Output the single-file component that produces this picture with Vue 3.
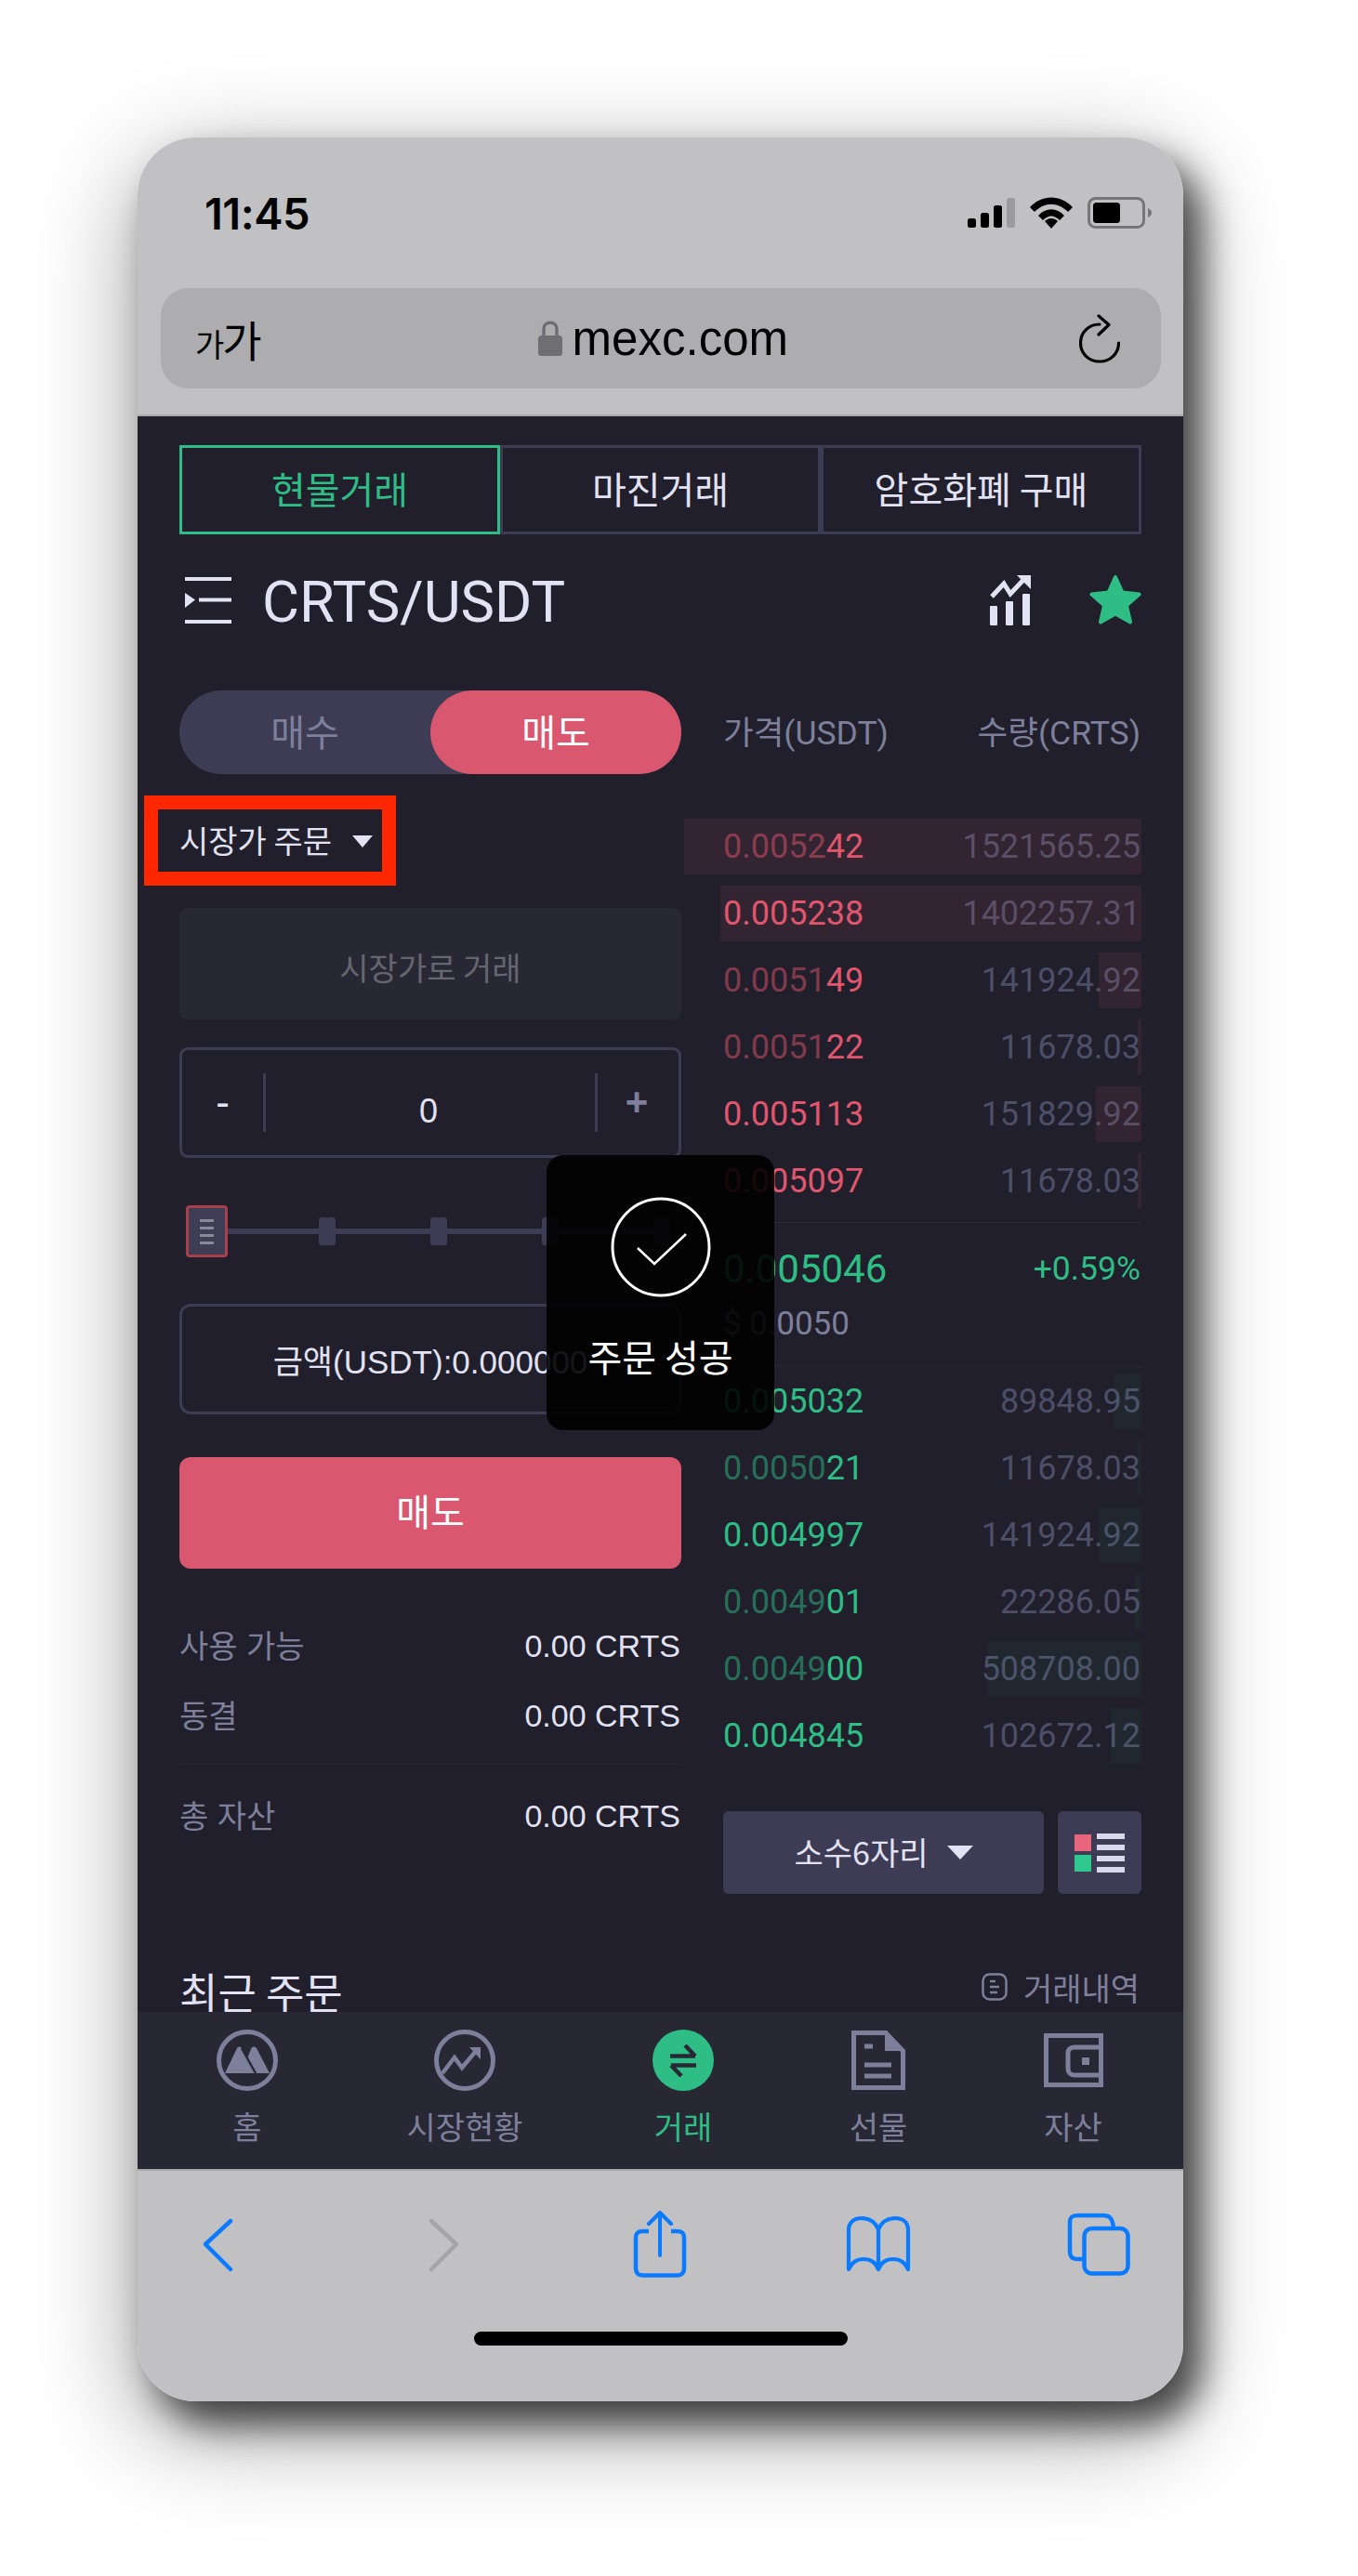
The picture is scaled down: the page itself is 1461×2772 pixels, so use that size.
<template>
  <div class="phone">
    <header class="chrome-top">
      <div class="status">
        <span class="clock">11:45</span>
        <div class="status-icons">
          <svg width="51" height="32" viewBox="0 0 51 32">
            <rect x="0" y="22" width="9" height="10" rx="2.5" fill="#000" />
            <rect x="14" y="16" width="9" height="16" rx="2.5" fill="#000" />
            <rect x="28" y="8" width="9" height="24" rx="2.5" fill="#000" />
            <rect x="42" y="0" width="9" height="32" rx="2.5" fill="#9b9b9d" />
          </svg>
          <svg width="46" height="34" viewBox="0 0 46 34">
            <path d="M0 11 C13 -3 33 -3 46 11 L41 16 C30 5 16 5 5 16 Z" fill="#000" />
            <path d="M9 20 C17 11 29 11 37 20 L32 25 C26 19 20 19 14 25 Z" fill="#000" />
            <path d="M16 26 C20 22 26 22 30 26 L23 34 Z" fill="#000" />
          </svg>
          <svg width="69" height="34" viewBox="0 0 69 34">
            <rect x="1.5" y="1.5" width="59" height="31" rx="7" fill="none" stroke="#767678" stroke-width="3" />
            <rect x="6" y="6" width="29" height="22" rx="3.5" fill="#000" />
            <path d="M65 12 C68 13 69 15 69 17 C69 19 68 21 65 22 Z" fill="#767678" />
          </svg>
        </div>
      </div>
      <div class="address">
        <span class="font-size-btn"><small>가</small>가</span>
        <div class="domain">
          <svg width="26" height="38" viewBox="0 0 26 38">
            <path d="M6 17 V9 C6 0 20 0 20 9 V17" fill="none" stroke="#6f6f73" stroke-width="3.5" />
            <rect x="0" y="16" width="26" height="22" rx="3.5" fill="#6f6f73" />
          </svg>
          <span>mexc.com</span>
        </div>
        <svg class="reload" width="44" height="53" viewBox="0 0 44 53">
          <path d="M22 11 C10 11 1.5 20 1.5 31 C1.5 42.5 10.500 51 22 51 C33.500 51 42.500 42.500 42.500 31" fill="none" stroke="#000" stroke-width="3.200" stroke-linecap="round" />
          <path d="M21 2 L32 11.500 L21 22" fill="none" stroke="#000" stroke-width="3.200" stroke-linecap="round" stroke-linejoin="round" />
        </svg>
      </div>
    </header>

    <main class="content">
      <div class="tabs">
        <button v-for="(tab, i) in tabs" :key="tab" class="tab" :class="{ active: i === 0 }">{{ tab }}</button>
      </div>

      <div class="title-row">
        <svg class="menu-icon" width="50" height="50" viewBox="0 0 50 50">
          <rect x="0" y="0" width="50" height="4" fill="#e2e2f4" />
          <rect x="15" y="22.500" width="35" height="4" fill="#e2e2f4" />
          <rect x="0" y="46" width="50" height="4" fill="#e2e2f4" />
          <path d="M0 17 L11 24.500 L0 33 Z" fill="#e2e2f4" />
        </svg>
        <h1>CRTS/USDT</h1>
        <svg class="chart-icon" width="45" height="54" viewBox="0 0 45 54">
          <path d="M2 23 L15 9 L22 20 L38 3" fill="none" stroke="#e2e2f4" stroke-width="5" />
          <path d="M29 0 H44 V15 Z" fill="#e2e2f4" />
          <rect x="0" y="33" width="8" height="21" rx="1" fill="#e2e2f4" />
          <rect x="17" y="28" width="8" height="26" rx="1" fill="#e2e2f4" />
          <rect x="35" y="20" width="8" height="34" rx="1" fill="#e2e2f4" />
        </svg>
        <svg width="56" height="54" viewBox="0 0 56 54">
          <path d="M28 2 L35.500 18.500 L53.500 20.500 L40 32.500 L44 50.500 L28 41.500 L12 50.500 L16 32.500 L2.500 20.500 L20.500 18.500 Z" fill="#2ebd85" stroke="#2ebd85" stroke-width="4" stroke-linejoin="round" />
        </svg>
      </div>

      <div class="trade">
        <section class="form">
          <div class="side-toggle">
            <span class="side">매수</span>
            <span class="side selected">매도</span>
          </div>

          <div class="order-type">
            <span>시장가 주문</span>
            <i class="caret small"></i>
          </div>

          <div class="market-field">시장가로 거래</div>

          <div class="stepper">
            <span class="step minus">-</span>
            <span class="step-value">0</span>
            <span class="step plus">+</span>
          </div>

          <div class="slider">
            <span class="handle"><b></b><b></b><b></b><b></b></span>
            <span v-for="n in 4" :key="n" class="tick"></span>
          </div>

          <div class="amount">금액(USDT):0.000000</div>
          <button class="sell-btn">매도</button>

          <div class="balance first"><span>사용 가능</span><strong>0.00 CRTS</strong></div>
          <div class="balance second"><span>동결</span><strong>0.00 CRTS</strong></div>
          <div class="balance total"><span>총 자산</span><strong>0.00 CRTS</strong></div>
        </section>

        <section class="book">
          <div class="book-head"><span>가격(USDT)</span><span>수량(CRTS)</span></div>

          <div class="rows">
            <div v-for="row in asks" :key="row.qty + row.bright" class="row ask">
              <span class="price"><em>{{ row.dim }}</em>{{ row.bright }}</span>
              <span class="qty">{{ row.qty }}</span>
              <i class="depth" :style="{ width: row.depth + 'px' }"></i>
            </div>
          </div>

          <div class="mid">
            <div class="mid-line">
              <span class="last">0.005046</span>
              <span class="change">+0.59%</span>
            </div>
            <div class="fiat">$ 0.0050</div>
          </div>

          <div class="rows">
            <div v-for="row in bids" :key="row.qty + row.bright" class="row bid">
              <span class="price"><em>{{ row.dim }}</em>{{ row.bright }}</span>
              <span class="qty">{{ row.qty }}</span>
              <i class="depth" :style="{ width: row.depth + 'px' }"></i>
            </div>
          </div>

          <div class="book-tools">
            <button class="precision"><span>소수6자리</span> <i class="caret"></i></button>
            <button class="layout-btn">
              <span class="swatches"><i></i><i></i></span>
              <span class="lines"><i></i><i></i><i></i><i></i></span>
            </button>
          </div>
        </section>
      </div>

      <div class="recent">
        <h2>최근 주문</h2>
        <span class="history">
          <svg width="28" height="30" viewBox="0 0 28 30">
            <rect x="1.500" y="1.500" width="25" height="27" rx="7" fill="none" stroke="#7d7f9b" stroke-width="2.500" />
            <path d="M9 9 H15 M9 15 H19 M9 21 H17" stroke="#7d7f9b" stroke-width="2.500" />
          </svg>
          거래내역
        </span>
      </div>

      <div class="toast">
        <svg width="108" height="108" viewBox="0 0 108 108">
          <circle cx="54" cy="54" r="52" fill="none" stroke="#fff" stroke-width="3" />
          <path d="M29 55 L47 72 L81 40" fill="none" stroke="#fff" stroke-width="2.500" />
        </svg>
        <span>주문 성공</span>
      </div>
    </main>

    <nav class="app-nav">
      <a class="nav-item">
        <svg width="66" height="66" viewBox="0 0 66 66">
          <circle cx="33" cy="33" r="30.500" fill="none" stroke="#7d7f9b" stroke-width="5" />
          <path d="M9 47 L22 20 C23 18 26 18 27 20 L33 31 L37 21 C38 18 41 18 43 20 L57 47 Z" fill="#7d7f9b" />
          <path d="M27 20 L42 47" stroke="#282835" stroke-width="2.500" />
        </svg>
        <span>홈</span>
      </a>
      <a class="nav-item">
        <svg width="66" height="66" viewBox="0 0 66 66">
          <circle cx="33" cy="33" r="30.500" fill="none" stroke="#7d7f9b" stroke-width="5" />
          <path d="M9 47 L22 30 L30 41 L45 23" fill="none" stroke="#7d7f9b" stroke-width="4.500" />
          <path d="M38 19 H50 V32 Z" fill="#7d7f9b" />
        </svg>
        <span>시장현황</span>
      </a>
      <a class="nav-item active">
        <svg width="66" height="66" viewBox="0 0 66 66">
          <circle cx="33" cy="33" r="33" fill="#2ebd85" />
          <path d="M19 28.500 H46 M35 17 L46 28.500" fill="none" stroke="#282835" stroke-width="4.500" />
          <path d="M47 38.500 H20 M31 50 L20 38.500" fill="none" stroke="#282835" stroke-width="4.500" />
        </svg>
        <span>거래</span>
      </a>
      <a class="nav-item">
        <svg width="58" height="64" viewBox="0 0 58 64">
          <path d="M2.500 2.500 H37 L55.500 22 V61.500 H2.500 Z" fill="none" stroke="#7d7f9b" stroke-width="5" />
          <path d="M36 3 L55 22 H36 Z" fill="#7d7f9b" />
          <path d="M14 17 H23 M14 37 H43 M14 49 H43" stroke="#7d7f9b" stroke-width="5" />
        </svg>
        <span>선물</span>
      </a>
      <a class="nav-item">
        <svg width="64" height="58" viewBox="0 0 64 58">
          <rect x="2.500" y="2.500" width="59" height="53" fill="none" stroke="#7d7f9b" stroke-width="5" />
          <path d="M62 15 H33 C28 15 26 18 26 21 V38 C26 42 29 45 33 45 H62" fill="none" stroke="#7d7f9b" stroke-width="5" />
          <rect x="41" y="26" width="8" height="8" fill="#7d7f9b" />
        </svg>
        <span>자산</span>
      </a>
    </nav>

    <footer class="chrome-bottom">
      <div class="toolbar">
        <svg width="60" height="72" viewBox="0 0 60 72">
          <path d="M44 11 L17 36 L44 63" fill="none" stroke="#0a7aff" stroke-width="4.500" stroke-linecap="round" stroke-linejoin="round" />
        </svg>
        <svg width="60" height="72" viewBox="0 0 60 72">
          <path d="M23 11 L50 36 L23 63" fill="none" stroke="#a5a5a8" stroke-width="4.500" stroke-linecap="round" stroke-linejoin="round" />
        </svg>
        <svg width="60" height="72" viewBox="-2 0 60 72">
          <path d="M18 22 H12 C6 22 4 24 4 29 V61 C4 67 6 69.500 12 69.500 H48 C54 69.500 56 67 56 61 V29 C56 24 54 22 48 22 H42" fill="none" stroke="#0a7aff" stroke-width="4.500" />
          <path d="M30 48 V3 M18 14 L30 2 L42 14" fill="none" stroke="#0a7aff" stroke-width="4" stroke-linecap="round" stroke-linejoin="round" />
        </svg>
        <svg width="70" height="60" viewBox="0 0 70 60">
          <path d="M35 14 C31 5 24 2 17 2 C8 2 3 7 3 15 V57 C7 48 13 46 19 46 C26 46 32 49 35 57 C38 49 44 46 51 46 C57 46 63 48 67 57 V15 C67 7 62 2 53 2 C46 2 39 5 35 14 V57" fill="none" stroke="#0a7aff" stroke-width="4.200" stroke-linejoin="round" />
        </svg>
        <svg width="68" height="68" viewBox="0 0 68 68">
          <path d="M17 50 H11 C5 50 3 47 3 42 V11 C3 5 5 3 11 3 H39 C45 3 49 5 50 17" fill="none" stroke="#0a7aff" stroke-width="4.500" />
          <rect x="18.500" y="17" width="47" height="48.500" rx="8" fill="none" stroke="#0a7aff" stroke-width="4.500" />
        </svg>
      </div>
      <div class="home-bar"></div>
    </footer>
  </div>
</template>

<script setup>
const tabs = ['현물거래', '마진거래', '암호화폐 구매'];

const asks = [
  { dim: '0.0052', bright: '42', qty: '1521565.25', depth: 492 },
  { dim: '', bright: '0.005238', qty: '1402257.31', depth: 453 },
  { dim: '0.0051', bright: '49', qty: '141924.92', depth: 46 },
  { dim: '0.0051', bright: '22', qty: '11678.03', depth: 4 },
  { dim: '', bright: '0.005113', qty: '151829.92', depth: 49 },
  { dim: '', bright: '0.005097', qty: '11678.03', depth: 4 },
];

const bids = [
  { dim: '', bright: '0.005032', qty: '89848.95', depth: 29 },
  { dim: '0.0050', bright: '21', qty: '11678.03', depth: 4 },
  { dim: '', bright: '0.004997', qty: '141924.92', depth: 46 },
  { dim: '0.0049', bright: '01', qty: '22286.05', depth: 7 },
  { dim: '0.0049', bright: '00', qty: '508708.00', depth: 165 },
  { dim: '', bright: '0.004845', qty: '102672.12', depth: 33 },
];
</script>

<style>
body {
  background: #fff;
}
</style>

<style scoped>
.phone {
  position: relative;
  width: 1125px;
  height: 2436px;
  margin: 148px 0 188px 148px;
  border-radius: 62px;
  box-shadow: 20px 24px 38px rgba(0, 0, 0, 0.65), 0 30px 110px rgba(0, 0, 0, 0.4);
  font-family: "Roboto", "Noto Sans CJK KR", sans-serif;
}

.chrome-top {
  height: 300px;
  box-sizing: border-box;
  padding: 0 24px 0 25px;
  background: #c1c1c3;
  border-radius: 62px 62px 0 0;
  border-bottom: 2px solid #a9a9ab;
}

.status {
  height: 162px;
  display: flex;
  align-items: center;
  justify-content: space-between;
  padding: 0 10px 0 47px;
  box-sizing: border-box;
}

.clock {
  font: 600 47px "Inter", "Liberation Sans", sans-serif;
  letter-spacing: -0.5px;
  color: #000;
}

.status-icons {
  display: flex;
  align-items: center;
  gap: 16px;
}

.address {
  height: 108px;
  display: flex;
  align-items: center;
  justify-content: space-between;
  padding: 0 44px 0 37px;
  background: #adadb0;
  border-radius: 30px;
}

.font-size-btn {
  font: 400 46px "Noto Sans CJK KR", sans-serif;
  color: #000;
  letter-spacing: -2px;
}

.font-size-btn small {
  font-size: 34px;
}

.domain {
  display: flex;
  align-items: center;
  gap: 11px;
  margin-right: 14px;
  font: 400 51px "Liberation Sans", sans-serif;
  color: #000;
}

.content {
  position: relative;
  height: 1717px;
  box-sizing: border-box;
  padding: 31px 45px 0;
  background: #201f2b;
  overflow: hidden;
  color: #e2e2f4;
}

.tabs {
  display: grid;
  grid-template-columns: 345px 345px 345px;
}

.tab {
  height: 96px;
  background: none;
  border: 3px solid #3e3c55;
  color: #e2e2f4;
  font: 400 40px "Noto Sans CJK KR", sans-serif;
  padding: 0 0 4px;
}

.tab.active {
  border-color: #2ebd85;
  color: #2ebd85;
}

.title-row {
  display: flex;
  align-items: center;
  height: 60px;
  margin-top: 41px;
}

.menu-icon {
  margin-left: 6px;
}

.title-row h1 {
  flex: 1;
  margin: 4px 0 0 33px;
  font: 400 61.500px "Roboto", sans-serif;
  color: #e2e2f4;
}

.chart-icon {
  margin-right: 62px;
}

.trade {
  display: grid;
  grid-template-columns: 540px 450px;
  gap: 45px;
  margin-top: 67px;
}

.side-toggle {
  height: 90px;
  display: grid;
  grid-template-columns: 1fr 1fr;
  background: #3e3c55;
  border-radius: 45px;
  text-align: center;
  font: 400 40px/87px "Noto Sans CJK KR", sans-serif;
}

.side {
  color: #7d7f9b;
}

.side.selected {
  color: #fff;
  background: #d9586f;
  border-radius: 45px;
}

.order-type {
  display: flex;
  align-items: center;
  justify-content: space-between;
  width: 241px;
  height: 67px;
  box-sizing: border-box;
  margin: 38px 0 0 -23px;
  padding: 0 10px 3px 23px;
  outline: 15px solid #ff2600;
  font: 400 34px "Noto Sans CJK KR", sans-serif;
}

.caret {
  display: inline-block;
  width: 0;
  height: 0;
  border-left: 14px solid transparent;
  border-right: 14px solid transparent;
  border-top: 15px solid #e2e2f4;
}

.caret.small {
  border-left-width: 11px;
  border-right-width: 11px;
  border-top-width: 13px;
  margin-top: 4px;
}

.market-field {
  margin-top: 39px;
  height: 120px;
  box-sizing: border-box;
  padding-top: 6px;
  display: flex;
  align-items: center;
  justify-content: center;
  background: #282835;
  border-radius: 9px;
  color: #66666f;
  font: 400 34px "Noto Sans CJK KR", sans-serif;
}

.stepper {
  margin-top: 30px;
  height: 119px;
  box-sizing: border-box;
  border: 3px solid #3e3c55;
  border-radius: 9px;
  display: grid;
  grid-template-columns: 90px 354px 1fr;
  align-items: center;
  text-align: center;
}

.step {
  font: 400 44px "Liberation Sans", sans-serif;
  height: 63px;
  line-height: 62px;
}

.minus {
  color: #e2e2f4;
  border-right: 3px solid #3e3c55;
}

.plus {
  color: #7d7f9b;
  font-size: 42px;
  font-weight: 700;
  border-left: 3px solid #3e3c55;
  padding-right: 3px;
}

.step-value {
  font: 400 36px "Liberation Sans", sans-serif;
  padding: 18px 4px 0 0;
}

.slider {
  margin: 51px 0 0 7px;
  width: 521px;
  height: 56px;
  display: flex;
  align-items: center;
  justify-content: space-between;
  background: linear-gradient(#3e3c55, #3e3c55) center / 100% 6px no-repeat;
}

.handle {
  width: 45px;
  height: 56px;
  margin-right: -4px;
  box-sizing: border-box;
  border: 3px solid #a8404c;
  border-radius: 4px;
  background: #3f3d53;
  display: flex;
  flex-direction: column;
  align-items: center;
  justify-content: center;
  gap: 5px;
}

.handle b {
  width: 15px;
  height: 3px;
  background: #8a8a99;
}

.tick {
  width: 18px;
  height: 30px;
  border-radius: 3px;
  background: #3e3c55;
}

.amount {
  margin-top: 50px;
  height: 119px;
  box-sizing: border-box;
  border: 3px solid #3e3c55;
  border-radius: 12px;
  display: flex;
  align-items: center;
  justify-content: center;
  font: 400 35px "Liberation Sans", "Noto Sans CJK KR", sans-serif;
  white-space: nowrap;
}

.sell-btn {
  display: block;
  width: 100%;
  height: 120px;
  margin-top: 46px;
  padding: 0 0 6px;
  border: none;
  border-radius: 12px;
  background: #d9586f;
  color: #fff;
  font: 400 40px "Noto Sans CJK KR", sans-serif;
}

.balance {
  display: flex;
  justify-content: space-between;
  align-items: center;
  height: 50px;
  font: 400 34px "Liberation Sans", "Noto Sans CJK KR", sans-serif;
  color: #7d7f9b;
}

.balance span {
  margin-top: -3px;
}

.balance strong {
  font-weight: 400;
  color: #e2e2f4;
  padding-right: 1px;
}

.balance.first {
  margin-top: 58px;
}

.balance.second {
  margin-top: 25px;
}

.balance.total {
  margin-top: 58px;
  position: relative;
}

.balance.total::before {
  content: "";
  position: absolute;
  left: 0;
  right: 0;
  top: -31px;
  height: 1px;
  background: #2a2936;
}

.book-head {
  height: 90px;
  box-sizing: border-box;
  padding: 0 1px 6px 0;
  display: flex;
  justify-content: space-between;
  align-items: center;
  color: #7d7f9b;
  font-size: 35.5px;
}

.rows {
  display: flex;
  flex-direction: column;
  gap: 12px;
}

.book-head + .rows {
  margin-top: 48px;
}

.row {
  position: relative;
  height: 60px;
  display: flex;
  align-items: center;
  justify-content: space-between;
  padding: 0 1px 0 0;
  font-size: 36px;
}

.price em {
  font-style: normal;
  opacity: 0.5;
}

.ask .price {
  color: #e0566e;
}

.bid .price {
  color: #2ebd85;
}

.qty {
  color: #4d4e68;
}

.depth {
  position: absolute;
  top: 0;
  right: 0;
  bottom: 0;
}

.ask .depth {
  background: rgba(217, 88, 111, 0.1);
}

.bid .depth {
  background: rgba(46, 189, 133, 0.05);
}

.mid {
  margin-top: 14px;
  height: 156px;
  box-sizing: border-box;
  border-top: 1px solid #2a2936;
  border-bottom: 1px solid #2a2936;
  margin-bottom: 7px;
  padding: 0 1px 0 0;
}

.mid-line {
  display: flex;
  justify-content: space-between;
  align-items: center;
  margin-top: 24px;
  height: 50px;
}

.last {
  font-size: 42px;
  color: #2ebd85;
}

.change {
  font-size: 35.500px;
  color: #2ebd85;
}

.fiat {
  margin-top: 14px;
  font-size: 35px;
  color: #7d7f9b;
}

.book-tools {
  display: grid;
  grid-template-columns: 345px 90px;
  gap: 15px;
  margin-top: 51px;
}

.book-tools button {
  height: 89px;
  border: none;
  border-radius: 6px;
  background: #3e3c55;
  padding: 0;
}

.precision {
  color: #e2e2f4;
  font: 400 34px "Noto Sans CJK KR", sans-serif;
  display: flex;
  align-items: center;
  justify-content: center;
  gap: 20px;
}

.precision span {
  margin-top: -3px;
}

.layout-btn {
  display: flex;
  align-items: center;
  justify-content: center;
  gap: 6px;
}

.swatches {
  display: flex;
  flex-direction: column;
  gap: 4px;
}

.swatches i {
  display: block;
  width: 18px;
  height: 18px;
  background: #e8667b;
}

.swatches i + i {
  background: #2ec78d;
}

.lines {
  display: flex;
  flex-direction: column;
  gap: 6px;
}

.lines i {
  display: block;
  width: 30px;
  height: 6px;
  background: #d8d8ea;
}

.recent {
  position: absolute;
  left: 45px;
  right: 45px;
  bottom: 0;
  height: 56px;
  display: flex;
  justify-content: space-between;
  align-items: flex-start;
}

.recent h2 {
  margin: 12px 0 0;
  font: 400 45px/44px "Noto Sans CJK KR", sans-serif;
  color: #e2e2f4;
}

.history {
  display: flex;
  align-items: center;
  gap: 17px;
  height: 50px;
  font: 400 34px "Noto Sans CJK KR", sans-serif;
  color: #7d7f9b;
  padding-right: 2px;
  margin-top: 4px;
}

.toast {
  position: absolute;
  left: 440px;
  top: 795px;
  width: 245px;
  height: 296px;
  border-radius: 18px;
  background: rgba(0, 0, 0, 0.9);
  display: flex;
  flex-direction: column;
  align-items: center;
  padding-top: 45px;
  box-sizing: border-box;
  color: #fff;
  font: 400 40px "Noto Sans CJK KR", sans-serif;
  gap: 34px;
  white-space: nowrap;
}

.app-nav {
  height: 169px;
  display: grid;
  grid-template-columns: 236px 232px 238px 182px 237px;
  background: #282835;
  box-sizing: border-box;
  padding-top: 19px;
}

.nav-item {
  display: flex;
  flex-direction: column;
  align-items: center;
  color: #7d7f9b;
  font: 400 34px "Noto Sans CJK KR", sans-serif;
}

.nav-item svg {
  height: 66px;
}

.nav-item span {
  margin-top: 13px;
}

.nav-item.active {
  color: #2ebd85;
}

.chrome-bottom {
  height: 250px;
  background: #c1c1c3;
  border-radius: 0 0 62px 62px;
  border-top: 2px solid #a9a9ab;
  box-sizing: border-box;
  padding-top: 43px;
}

.toolbar {
  display: flex;
  justify-content: space-between;
  align-items: center;
  height: 72px;
  padding: 0 56px 0 51px;
}

.toolbar svg {
  width: 70px;
}

.home-bar {
  width: 402px;
  height: 15px;
  margin: 58px auto 0;
  border-radius: 8px;
  background: #000;
}
</style>
